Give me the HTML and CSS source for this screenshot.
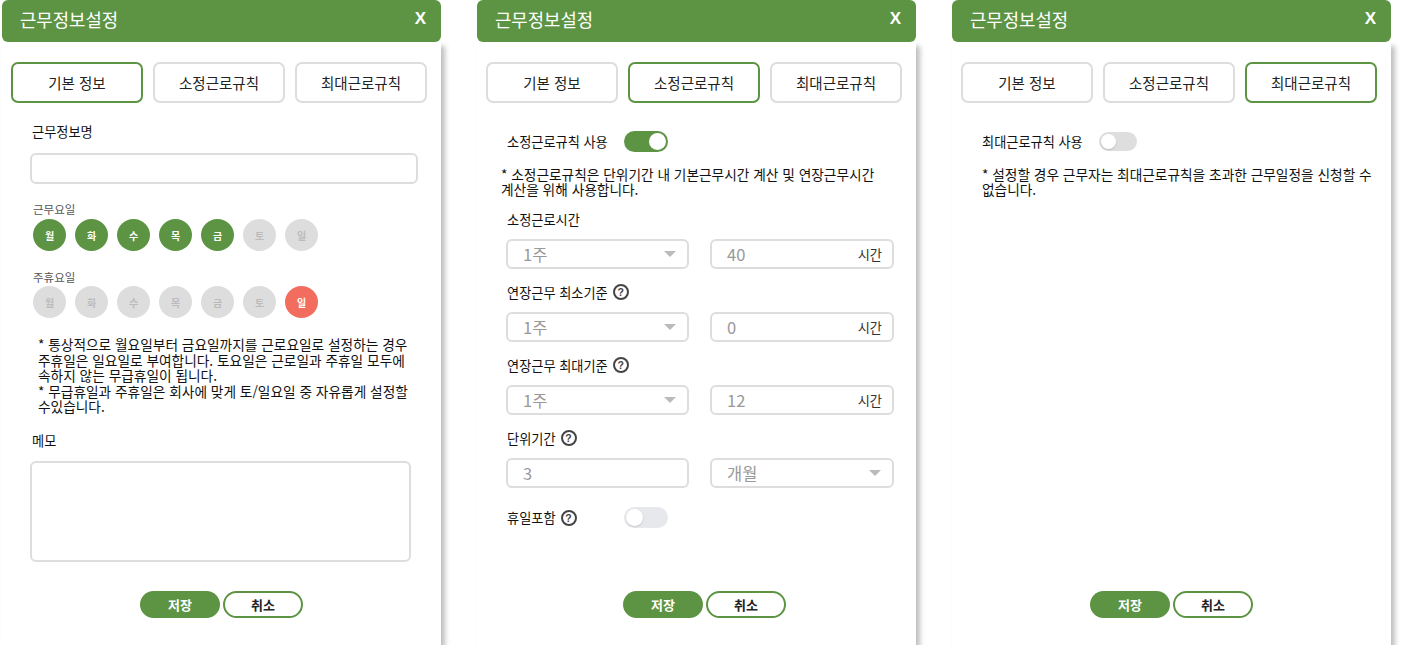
FILE: index.html
```html
<!DOCTYPE html>
<html lang="ko">
<head>
  <meta charset="UTF-8" />
  <meta name="viewport" content="width=device-width, initial-scale=1" />
  <title>근무정보설정</title>
  <link rel="stylesheet" href="styles.css">
</head>
<body>
  <div class="screens">

    <!-- 기본 정보 -->
    <div class="modal">
      <div class="modal-head">
        <span class="modal-title">근무정보설정</span>
        <span class="modal-close">X</span>
      </div>
      <div class="modal-body">
        <div class="tabs">
          <div class="tab active">기본 정보</div>
          <div class="tab">소정근로규칙</div>
          <div class="tab">최대근로규칙</div>
        </div>

        <div class="pane">
          <label class="field-label first">근무정보명</label>
          <input type="text" class="text-input" />

          <div class="day-label">근무요일</div>
          <div class="days">
            <span class="day on">월</span>
            <span class="day on">화</span>
            <span class="day on">수</span>
            <span class="day on">목</span>
            <span class="day on">금</span>
            <span class="day">토</span>
            <span class="day">일</span>
          </div>

          <div class="day-label">주휴요일</div>
          <div class="days">
            <span class="day">월</span>
            <span class="day">화</span>
            <span class="day">수</span>
            <span class="day">목</span>
            <span class="day">금</span>
            <span class="day">토</span>
            <span class="day rest">일</span>
          </div>

          <p class="note note-basic">
            * 통상적으로 월요일부터 금요일까지를 근로요일로 설정하는 경우<br>
            주휴일은 일요일로 부여합니다. 토요일은 근로일과 주휴일 모두에<br>
            속하지 않는 무급휴일이 됩니다.<br>
            * 무급휴일과 주휴일은 회사에 맞게 토/일요일 중 자유롭게 설정할<br>
            수있습니다.
          </p>

          <label class="field-label memo">메모</label>
          <textarea class="memo-input"></textarea>
        </div>

        <div class="actions">
          <button class="btn btn-save">저장</button>
          <button class="btn btn-cancel">취소</button>
        </div>
      </div>
    </div>

    <!-- 소정근로규칙 -->
    <div class="modal">
      <div class="modal-head">
        <span class="modal-title">근무정보설정</span>
        <span class="modal-close">X</span>
      </div>
      <div class="modal-body">
        <div class="tabs">
          <div class="tab">기본 정보</div>
          <div class="tab active">소정근로규칙</div>
          <div class="tab">최대근로규칙</div>
        </div>

        <div class="pane">
          <div class="switch-row">
            <span class="switch-label">소정근로규칙 사용</span>
            <span class="switch on"></span>
          </div>

          <p class="note note-rule">
            * 소정근로규칙은 단위기간 내 기본근무시간 계산 및 연장근무시간<br>
            계산을 위해 사용합니다.
          </p>

          <div class="field-label first-rule">소정근로시간</div>
          <div class="form-row">
            <div class="select"><span>1주</span><i class="caret"></i></div>
            <div class="unit-input"><span>40</span><span class="unit">시간</span></div>
          </div>

          <div class="field-label">연장근무 최소기준 <span class="help">?</span></div>
          <div class="form-row">
            <div class="select"><span>1주</span><i class="caret"></i></div>
            <div class="unit-input"><span>0</span><span class="unit">시간</span></div>
          </div>

          <div class="field-label">연장근무 최대기준 <span class="help">?</span></div>
          <div class="form-row">
            <div class="select"><span>1주</span><i class="caret"></i></div>
            <div class="unit-input"><span>12</span><span class="unit">시간</span></div>
          </div>

          <div class="field-label">단위기간 <span class="help">?</span></div>
          <div class="form-row">
            <div class="unit-input"><span>3</span></div>
            <div class="select"><span>개월</span><i class="caret"></i></div>
          </div>

          <div class="switch-row holiday">
            <span class="switch-label">휴일포함 <span class="help">?</span></span>
            <span class="switch"></span>
          </div>
        </div>

        <div class="actions shifted">
          <button class="btn btn-save">저장</button>
          <button class="btn btn-cancel">취소</button>
        </div>
      </div>
    </div>

    <!-- 최대근로규칙 -->
    <div class="modal">
      <div class="modal-head">
        <span class="modal-title">근무정보설정</span>
        <span class="modal-close">X</span>
      </div>
      <div class="modal-body">
        <div class="tabs">
          <div class="tab">기본 정보</div>
          <div class="tab">소정근로규칙</div>
          <div class="tab active">최대근로규칙</div>
        </div>

        <div class="pane">
          <div class="switch-row">
            <span class="switch-label">최대근로규칙 사용</span>
            <span class="switch small"></span>
          </div>

          <p class="note note-max">
            * 설정할 경우 근무자는 최대근로규칙을 초과한 근무일정을 신청할 수<br>
            없습니다.
          </p>
        </div>

        <div class="actions">
          <button class="btn btn-save">저장</button>
          <button class="btn btn-cancel">취소</button>
        </div>
      </div>
    </div>

  </div>
</body>
</html>
```

FILE: styles.css
```css
body {
  margin: 0;
  background: #fff;
  color: #222;
  font-family: "Noto Sans CJK KR", "Noto Sans", sans-serif;
}
.screens {
  display: flex;
  gap: 36px;
  padding-left: 2px;
  align-items: flex-start;
}
.modal {
  width: 439px;
  position: relative;
}
.modal-head {
  position: relative;
  z-index: 1;
  height: 42px;
  box-sizing: border-box;
  padding: 0 15px 4px 18px;
  background: #5d9443;
  border-radius: 6px;
  color: #fff;
  display: flex;
  align-items: center;
  justify-content: space-between;
}
.modal-title {
  font-size: 17.8px;
}
.modal-close {
  font-family: "Liberation Sans", sans-serif;
  font-weight: bold;
  font-size: 17px;
}
.modal-body {
  height: 603px;
  box-sizing: border-box;
  padding: 20px 9px 27px;
  display: flex;
  flex-direction: column;
  background: #fff;
  box-shadow: 4px 4px 5px rgba(0, 0, 0, 0.25);
}
.tabs {
  display: flex;
  gap: 10px;
}
.tab {
  width: 132px;
  height: 41px;
  box-sizing: border-box;
  border: 2px solid #ddd;
  border-radius: 7px;
  display: flex;
  align-items: center;
  justify-content: center;
  font-size: 14.5px;
  color: #222;
}
.tab.active {
  border-color: #5d9443;
}
.pane {
  padding-left: 19px;
}
.field-label {
  display: flex;
  align-items: center;
  height: 18px;
  padding-left: 2px;
  margin-top: 14px;
  font-size: 13.2px;
  color: #111;
}
.field-label.first {
  margin-top: 19px;
}
.field-label.memo {
  margin-top: 17px;
}
.field-label.first-rule {
  margin-top: 13px;
}
.text-input {
  display: block;
  width: 388px;
  height: 31px;
  box-sizing: border-box;
  margin-top: 13px;
  border: 2px solid #ddd;
  border-radius: 6px;
}
.memo-input {
  display: block;
  width: 381px;
  height: 101px;
  box-sizing: border-box;
  margin-top: 11px;
  border: 2px solid #ddd;
  border-radius: 6px;
  resize: none;
}
.day-label {
  height: 16px;
  line-height: 16px;
  margin-top: 17px;
  padding-left: 3px;
  font-size: 11.5px;
  color: #555;
}
.days {
  display: flex;
  gap: 9px;
  margin-top: 2px;
  padding-left: 3px;
}
.days + .day-label {
  margin-top: 18px;
}
.days + .day-label + .days {
  margin-top: 1px;
}
.day {
  width: 33px;
  height: 32px;
  border-radius: 50%;
  background: #ddd;
  color: #bbb;
  font-size: 10px;
  font-weight: bold;
  display: flex;
  align-items: center;
  justify-content: center;
}
.day.on {
  background: #5d9443;
  color: #fff;
}
.day.rest {
  background: #f26d5e;
  color: #fff;
}
.note {
  margin: 0;
  font-size: 13.7px;
  color: #111;
  white-space: nowrap;
}
.note-basic {
  margin-top: 19px;
  padding-left: 8px;
  line-height: 15.5px;
}
.note-rule {
  margin-top: 15px;
  margin-left: -4px;
  line-height: 15px;
}
.note-max {
  margin-top: 15px;
  padding-left: 2px;
  line-height: 15px;
}
.switch-row {
  display: flex;
  align-items: center;
  height: 21px;
  margin-top: 28px;
  padding-left: 2px;
}
.switch-row.holiday {
  margin-top: 19px;
}
.switch-label {
  width: 117px;
  display: flex;
  align-items: center;
  font-size: 13.2px;
  color: #111;
}
.switch {
  position: relative;
  width: 44px;
  height: 21px;
  border-radius: 11px;
  background: #e6e8eb;
}
.switch::after {
  content: "";
  position: absolute;
  top: 2px;
  left: 2px;
  width: 17px;
  height: 17px;
  border-radius: 50%;
  background: #fff;
  box-shadow: 0 1px 2px rgba(0, 0, 0, 0.15);
}
.switch.on {
  background: #5d9443;
}
.switch.on::after {
  left: 25px;
  box-shadow: none;
}
.switch.small {
  width: 38px;
  height: 19px;
  background: #dedede;
}
.switch.small::after {
  width: 15px;
  height: 15px;
}
.help {
  display: inline-flex;
  align-items: center;
  justify-content: center;
  width: 16px;
  height: 16px;
  box-sizing: border-box;
  margin-left: 5px;
  border: 2px solid #444;
  border-radius: 50%;
  font-family: "Liberation Sans", sans-serif;
  font-size: 10.5px;
  font-weight: bold;
  color: #444;
}
.form-row {
  display: grid;
  grid-template-columns: 183px 184px;
  gap: 21px;
  margin-top: 11px;
  padding-left: 1px;
}
.select,
.unit-input {
  height: 30px;
  box-sizing: border-box;
  border: 2px solid #ddd;
  border-radius: 6px;
  padding: 0 10px 0 15px;
  display: flex;
  align-items: center;
  justify-content: space-between;
  font-size: 16.5px;
  color: #999;
}
.caret {
  width: 0;
  height: 0;
  border-left: 6px solid transparent;
  border-right: 6px solid transparent;
  border-top: 6px solid #bbb;
  margin-right: 1px;
}
.unit {
  font-size: 13.2px;
  color: #333;
}
.actions {
  margin-top: auto;
  display: flex;
  justify-content: center;
  gap: 3px;
}
.actions.shifted {
  padding-left: 16px;
}
.btn {
  width: 80px;
  height: 27px;
  box-sizing: border-box;
  border-radius: 14px;
  font-family: "Noto Sans CJK KR", sans-serif;
  font-size: 13px;
  font-weight: bold;
  cursor: pointer;
}
.btn-save {
  border: none;
  background: #5d9443;
  color: #fff;
}
.btn-cancel {
  border: 2px solid #5d9443;
  background: #fff;
  color: #222;
}
```
